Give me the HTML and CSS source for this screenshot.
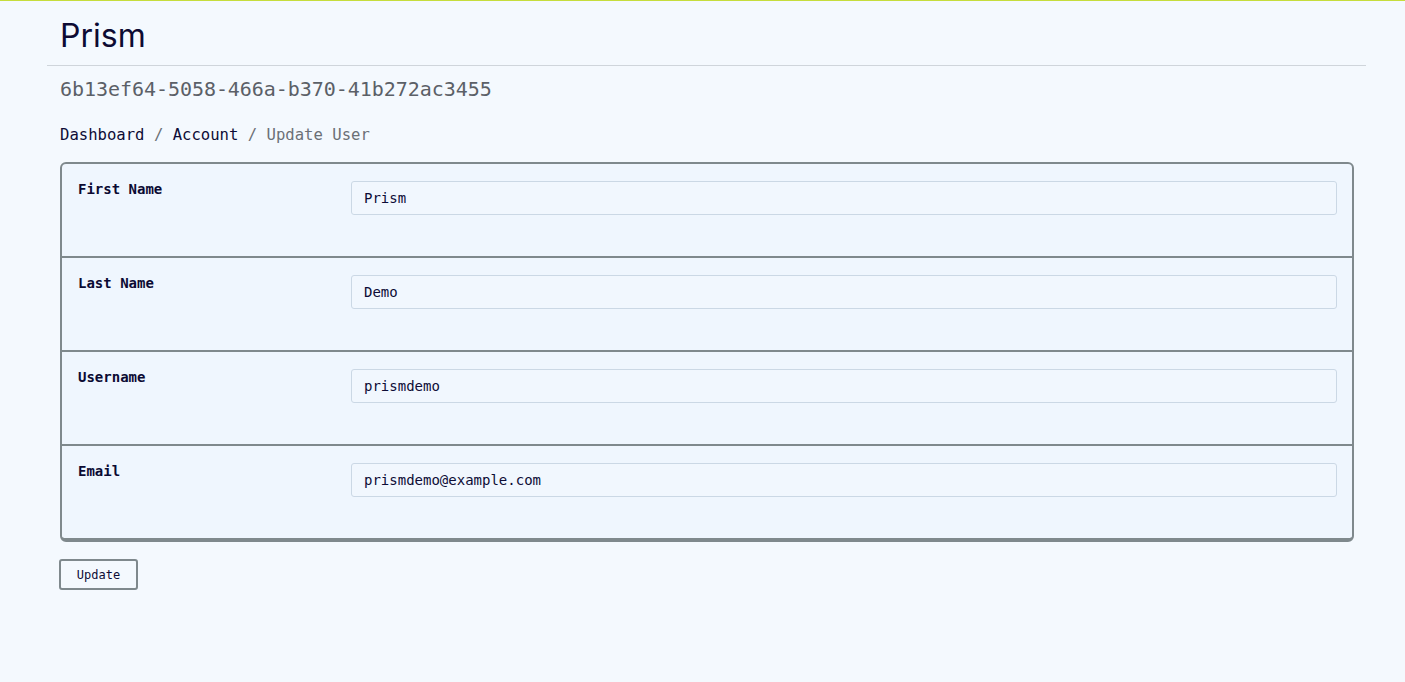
FILE: index.html
```html
<!DOCTYPE html>
<html lang="en">
<head>
<meta charset="utf-8">
<title>Update User</title>
<link rel="stylesheet" href="styles.css">
</head>
<body>
<div class="topbar"></div>
<header class="header">
  <h1 class="title">Prism</h1>
</header>
<main class="main">
  <div class="uuid">6b13ef64-5058-466a-b370-41b272ac3455</div>
  <nav class="crumbs">
    <a class="crumb" href="#">Dashboard</a>
    <span class="sep">/</span>
    <a class="crumb" href="#">Account</a>
    <span class="sep">/</span>
    <span class="crumb current">Update User</span>
  </nav>
  <form class="card">
    <div class="row">
      <label class="label" for="first">First Name</label>
      <input class="input" id="first" type="text" value="Prism">
    </div>
    <div class="row">
      <label class="label" for="last">Last Name</label>
      <input class="input" id="last" type="text" value="Demo">
    </div>
    <div class="row">
      <label class="label" for="user">Username</label>
      <input class="input" id="user" type="text" value="prismdemo">
    </div>
    <div class="row">
      <label class="label" for="email">Email</label>
      <input class="input" id="email" type="text" value="prismdemo@example.com">
    </div>
  </form>
  <button class="btn" type="button">Update</button>
</main>
</body>
</html>
```
FILE: styles.css
```css
* { box-sizing: border-box; }
html, body { margin: 0; padding: 0; }
body {
  background: #f4f9fe;
  color: #0d0c36;
  font-family: "DejaVu Sans Mono", "Liberation Mono", monospace;
}
.topbar {
  height: 1px;
  background: #c6dd3c;
}
.header {
  margin: 0 39px 0 47px;
  padding: 0 0 0 13px;
  border-bottom: 1px solid #cfd5db;
}
.title {
  margin: 0;
  padding: 17px 0 11px;
  font-family: "Inter", "Noto Sans", sans-serif;
  font-weight: 400;
  font-size: 32px;
  line-height: 36px;
  color: #0d0b33;
}
.main {
  padding: 11px 51px 0 60px;
}
.uuid {
  font-size: 20px;
  line-height: 24px;
  color: #5b6067;
  letter-spacing: -0.05px;
}
.crumbs {
  margin-top: 23px;
  font-size: 15.6px;
  line-height: 22px;
  display: flex;
  gap: 9.4px;
  color: #6b7076;
}
.crumb { color: #0d0c36; text-decoration: none; }
.crumb.current { color: #6b7076; }
.card {
  margin-top: 16px;
  border: 2px solid #7f898d;
  border-bottom-width: 4px;
  border-radius: 6px;
  background: #eff6fe;
  overflow: hidden;
}
.row {
  display: grid;
  grid-template-columns: 273px 1fr;
  align-items: start;
  height: 94px;
  padding: 17px 15px 0 16px;
  border-bottom: 2px solid #7f898d;
}
.row:last-child { border-bottom: 0; height: 92px; }
.label {
  padding-top: 0;
  font-size: 14px;
  font-weight: 700;
  line-height: 17px;
  color: #0b0a33;
}
.input {
  height: 34px;
  padding: 0 12px;
  border: 1px solid #cbd8e5;
  border-radius: 3px;
  background: #f1f7fe;
  font-family: inherit;
  font-size: 14px;
  color: #0d0c36;
  outline: none;
}
.btn {
  margin-top: 17px;
  margin-left: -1px;
  width: 79px;
  height: 31px;
  border: 2px solid #7f898d;
  border-radius: 3px;
  background: #f4f9fe;
  font-family: inherit;
  font-size: 12px;
  color: #0d0c36;
  padding: 0;
}
```
